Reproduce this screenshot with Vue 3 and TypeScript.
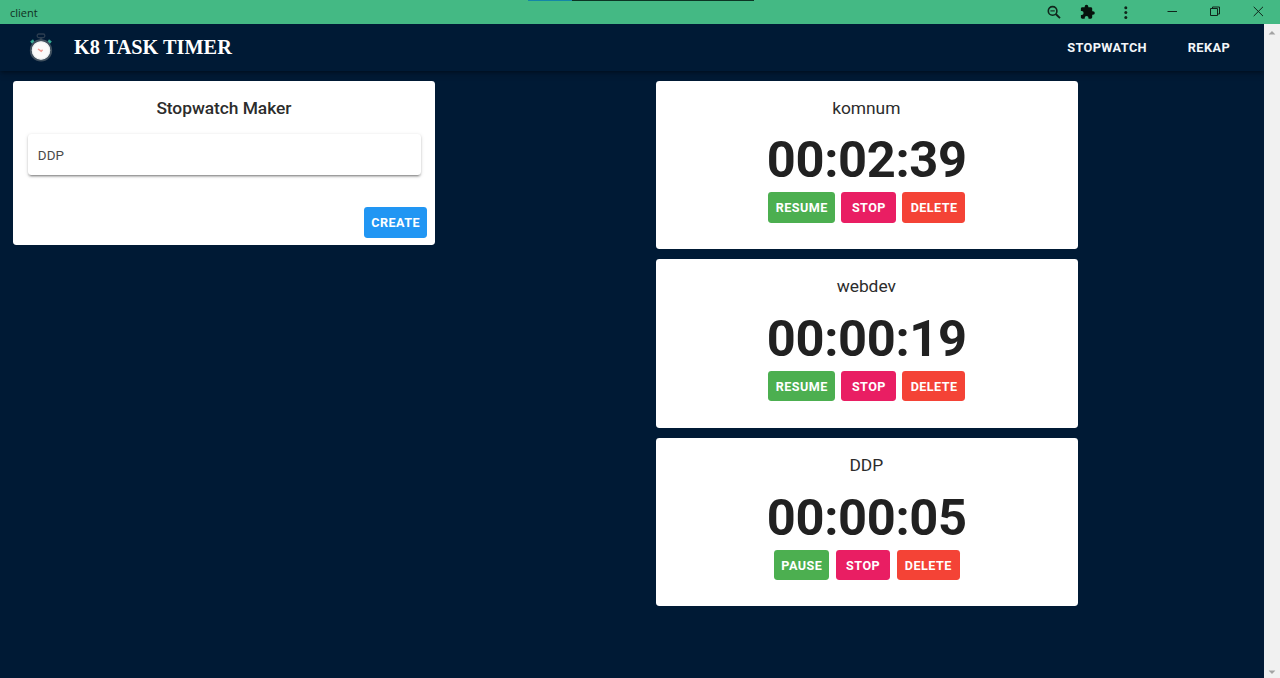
<script setup lang="ts">
import { ref } from 'vue'

interface Timer {
  name: string
  time: string
  running: boolean
}

const task = ref('DDP')
const timers = ref<Timer[]>([
  { name: 'komnum', time: '00:02:39', running: false },
  { name: 'webdev', time: '00:00:19', running: false },
  { name: 'DDP', time: '00:00:05', running: true },
])
</script>

<template>
  <div class="window">
    <div class="titlebar">
      <span class="caption">client</span>
      <div class="task-strip"><i></i></div>
      <svg class="window-icons" width="240" height="24" viewBox="1040 0 240 24" fill="none" stroke="#10251b">
        <g stroke-width="1.6">
          <circle cx="1052.6" cy="10.9" r="4.3" />
          <path d="M1055.7 14 L1060 18.1" stroke-width="1.9" />
          <path d="M1050.4 10.9 H1054.8" stroke-width="1.1" />
        </g>
        <path
          fill="#06120c"
          stroke="none"
          d="M1093 11.2h-.8V8.7c0-.8-.6-1.4-1.4-1.4h-2.5v-.7a1.8 1.8 0 0 0-3.6 0v.7h-2.4c-.8 0-1.4.6-1.4 1.4v2.4h.8a1.9 1.9 0 0 1 0 3.8h-.8v2.4c0 .8.6 1.4 1.4 1.4h2.4v-.8a1.9 1.9 0 0 1 3.8 0v.8h2.3c.8 0 1.4-.6 1.4-1.4v-2.5h.8a1.8 1.8 0 0 0 0-3.6z"
        />
        <g fill="#10251b" stroke="none">
          <circle cx="1125.8" cy="7.8" r="1.5" />
          <circle cx="1125.8" cy="12.6" r="1.5" />
          <circle cx="1125.8" cy="17.4" r="1.5" />
        </g>
        <path d="M1167.5 11.5 H1177" />
        <path d="M1210.5 8.5 h7 v7 h-7 z M1212.5 8.5 v-1.5 h7 v7 h-2" />
        <path d="M1253.7 6.8 L1263 16.1 M1263 6.8 L1253.7 16.1" />
      </svg>
    </div>

    <div class="body">
      <div class="page">
        <header class="appbar">
          <svg class="logo" width="26" height="30" viewBox="0 0 26 30">
            <rect x="9.2" y="1" width="7.6" height="3.6" rx="1.5" fill="none" stroke="#2c3e50" stroke-width="1.3" />
            <path d="M13 4 V8" stroke="#2c3e50" stroke-width="2.6" />
            <path d="M5.2 9.2 L7.5 11.5 M20.8 9.2 L18.5 11.5" stroke="#34495e" stroke-width="1.6" />
            <path d="M2.2 8.6 L5 6.2 L6.6 9 L4.2 11 Z M23.8 8.6 L21 6.2 L19.4 9 L21.8 11 Z" fill="#35a994" />
            <circle cx="13" cy="17.4" r="10.2" fill="#fafafa" stroke="#40515f" stroke-width="1.9" />
            <circle cx="13" cy="17.4" r="8.6" fill="none" stroke="#dfe5e8" stroke-width=".6" />
            <path d="M10 16 L13.2 18.2 L14.6 16.8" fill="none" stroke="#ef9a92" stroke-width="1.5" />
          </svg>
          <h1 class="brand">K8 TASK TIMER</h1>
          <nav class="nav">
            <a>STOPWATCH</a>
            <a>REKAP</a>
          </nav>
        </header>

        <main class="content">
          <section class="card maker">
            <h2 class="title">Stopwatch Maker</h2>
            <input v-model="task" class="field" type="text" />
            <div class="actions">
              <button class="btn create">CREATE</button>
            </div>
          </section>

          <div class="list">
            <section v-for="timer in timers" :key="timer.name" class="card timer">
              <h2 class="title name">{{ timer.name }}</h2>
              <div class="time">{{ timer.time }}</div>
              <div class="controls">
                <button class="btn green" :class="{ pause: timer.running }">
                  {{ timer.running ? 'PAUSE' : 'RESUME' }}
                </button>
                <button class="btn pink">STOP</button>
                <button class="btn red">DELETE</button>
              </div>
            </section>
          </div>
        </main>
      </div>

      <div class="scrollbar">
        <svg width="8" height="5" viewBox="0 0 8 5"><path d="M0.6 4.6 L4 1 L7.4 4.6 Z" fill="#a3a3a3" /></svg>
        <svg width="8" height="5" viewBox="0 0 8 5"><path d="M0.6 .4 L4 4 L7.4 .4 Z" fill="#a3a3a3" /></svg>
      </div>
    </div>
  </div>
</template>

<style>
body {
  overflow: hidden;
  background: #001a35;
}
</style>

<style scoped>
* {
  box-sizing: border-box;
}

.window {
  display: flex;
  flex-direction: column;
  width: 1280px;
  height: 678px;
  overflow: hidden;
  font-family: Roboto, 'Liberation Sans', sans-serif;
}

.titlebar {
  position: relative;
  display: flex;
  flex: none;
  align-items: center;
  justify-content: space-between;
  height: 24px;
  padding-left: 10px;
  background: #44b984;
}

.caption {
  padding-top: 1px;
  color: #10301f;
  font: 11px 'Open Sans', 'Noto Sans', sans-serif;
}

.task-strip {
  position: absolute;
  top: 0;
  left: 528px;
  width: 226px;
  height: 1px;
  background: #0c3524;
}

.task-strip i {
  display: block;
  width: 44px;
  height: 1px;
  background: #1486a8;
}

.window-icons {
  display: block;
}

.body {
  display: flex;
  flex: 1;
  min-height: 0;
}

.page {
  flex: 1;
  background: #001a35;
}

.scrollbar {
  display: flex;
  flex-direction: column;
  align-items: center;
  justify-content: space-between;
  width: 16px;
  padding: 6px 0 3px;
  background: #f1f1f1;
}

.appbar {
  display: flex;
  align-items: center;
  height: 47px;
  padding: 0 34px 0 28px;
  background: #001a35;
  box-shadow: 0 2px 3px -1px rgba(0, 0, 0, 0.3), 0 3px 7px rgba(0, 0, 0, 0.2);
}

.brand {
  margin: 0 auto 0 20px;
  color: #fff;
  font: 700 20.3px 'Liberation Serif', serif;
}

.nav {
  display: flex;
  gap: 40.8px;
  color: #f3f6f9;
  font-size: 12.8px;
  font-weight: 700;
  letter-spacing: 0.36px;
}

.content {
  display: flex;
  align-items: flex-start;
  justify-content: space-between;
  padding: 9.7px 186.4px 0 13px;
}

.list {
  display: flex;
  flex-direction: column;
  gap: 10.6px;
}

.card {
  width: 421.7px;
  border-radius: 3.4px;
  background: #fff;
  color: #212121;
  text-align: center;
}

.maker {
  height: 164.4px;
  padding: 14.1px 7.4px 0 14.8px;
}

.timer {
  height: 168.2px;
  padding-top: 14px;
}

.title {
  margin: 0;
  color: #2c2c2c;
  font-size: 17.4px;
  font-weight: 500;
  line-height: 27px;
  letter-spacing: -0.06px;
}

.maker .title {
  padding-right: 7.4px;
}

.name {
  padding-right: 1px;
  font-weight: 400;
  letter-spacing: -0.04px;
}

.field {
  display: block;
  width: 393px;
  height: 40.6px;
  margin-top: 12.7px;
  padding: 2px 10px 0;
  border: 0;
  border-radius: 3.4px;
  outline: 0;
  background: #fff;
  box-shadow: 0 2.5px 1px -2px rgba(0, 0, 0, 0.2), 0 1.5px 2px rgba(0, 0, 0, 0.2), 0 1px 4px rgba(0, 0, 0, 0.12);
  color: #4a4a4a;
  font: 13.4px Roboto, sans-serif;
  letter-spacing: 0.1px;
}

.actions {
  display: flex;
  justify-content: flex-end;
  margin-top: 32px;
}

.time {
  margin-top: 8.5px;
  font-size: 50.6px;
  font-weight: 700;
  line-height: 59px;
  letter-spacing: -0.35px;
}

.controls {
  display: flex;
  justify-content: center;
  gap: 6.5px;
  margin-top: 3px;
}

.btn {
  height: 30.5px;
  padding: 0 0 0 0.5px;
  border: 0;
  border-radius: 3.4px;
  color: #fff;
  font: 700 12.6px Roboto, sans-serif;
  letter-spacing: 0.46px;
}

.create {
  width: 63.8px;
  background: #2196f3;
}

.green {
  width: 66.8px;
  background: #4caf50;
}

.pause {
  width: 55.2px;
}

.pink {
  width: 54.4px;
  background: #e91e63;
}

.red {
  width: 63px;
  background: #f44336;
}
</style>
